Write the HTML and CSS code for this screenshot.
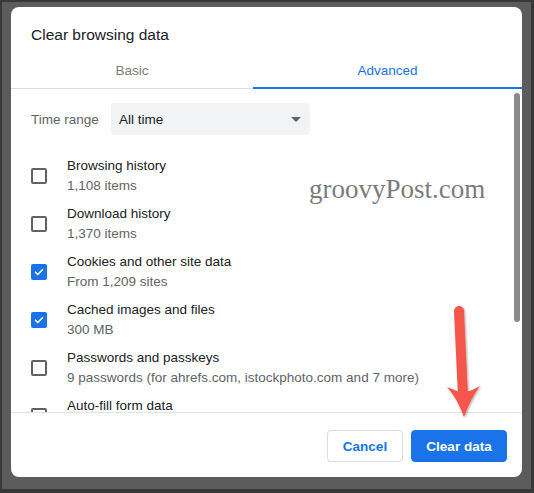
FILE: index.html
```html
<!DOCTYPE html>
<html lang="en">
<head>
<meta charset="utf-8">
<title>Clear browsing data</title>
<link rel="stylesheet" href="styles.css">
</head>
<body>
<div class="screen">
  <div class="dialog">
    <h1 class="title">Clear browsing data</h1>
    <div class="tabs">
      <div class="tab">Basic</div>
      <div class="tab active">Advanced</div>
    </div>
    <div class="body">
      <div class="range-row">
        <span class="range-label">Time range</span>
        <div class="select">
          <span>All time</span>
          <svg class="caret" width="10" height="5" viewBox="0 0 10 5"><path d="M0 0h10L5 5z" fill="#5f6368"/></svg>
        </div>
      </div>
      <ul class="items">
        <li class="item">
          <span class="box"></span>
          <div class="text"><div class="name">Browsing history</div><div class="sub">1,108 items</div></div>
        </li>
        <li class="item">
          <span class="box"></span>
          <div class="text"><div class="name">Download history</div><div class="sub">1,370 items</div></div>
        </li>
        <li class="item">
          <span class="box checked"><svg width="12" height="12" viewBox="0 0 12 12"><path d="M2.5 6.2l2.3 2.3 4.7-4.8" fill="none" stroke="#fff" stroke-width="1.6" stroke-linecap="round" stroke-linejoin="round"/></svg></span>
          <div class="text"><div class="name">Cookies and other site data</div><div class="sub">From 1,209 sites</div></div>
        </li>
        <li class="item">
          <span class="box checked"><svg width="12" height="12" viewBox="0 0 12 12"><path d="M2.5 6.2l2.3 2.3 4.7-4.8" fill="none" stroke="#fff" stroke-width="1.6" stroke-linecap="round" stroke-linejoin="round"/></svg></span>
          <div class="text"><div class="name">Cached images and files</div><div class="sub">300 MB</div></div>
        </li>
        <li class="item">
          <span class="box"></span>
          <div class="text"><div class="name">Passwords and passkeys</div><div class="sub">9 passwords (for ahrefs.com, istockphoto.com and 7 more)</div></div>
        </li>
        <li class="item">
          <span class="box"></span>
          <div class="text"><div class="name">Auto-fill form data</div><div class="sub">&nbsp;</div></div>
        </li>
      </ul>
      <div class="thumb"></div>
      <div class="watermark">groovyPost.com</div>
    </div>
    <div class="footer">
      <button class="btn cancel">Cancel</button>
      <button class="btn primary">Clear data</button>
    </div>
  </div>
  <svg class="arrow" width="534" height="493" viewBox="0 0 534 493">
    <defs>
      <filter id="sh" x="-50%" y="-50%" width="200%" height="200%">
        <feDropShadow dx="1" dy="1" stdDeviation="1" flood-color="#000" flood-opacity="0.35"/>
      </filter>
    </defs>
    <g filter="url(#sh)" fill="#f4574b">
      <path d="M459 311 L463 396" stroke="#f4574b" stroke-width="10" stroke-linecap="round"/>
      <path d="M447 387 Q456 391 463 393 Q472 391 480 386 Q471 398 464 417 Q457 398 447 387 Z"/>
    </g>
  </svg>
</div>
</body>
</html>
```

FILE: styles.css
```css
* { box-sizing: border-box; }

html, body {
  margin: 0;
  padding: 0;
}

body {
  width: 534px;
  height: 493px;
  overflow: hidden;
  font-family: "Liberation Sans", Arial, sans-serif;
  background: #383838;
}

.screen {
  position: relative;
  width: 534px;
  height: 493px;
  background: #5c5c5c;
  border-style: solid;
  border-color: #383838;
  border-width: 2px 3px 4px 2px;
  padding: 5px 0 0 9px;
}

.dialog {
  width: 511px;
  height: 470px;
  background: #fff;
  border-radius: 8px;
  display: flex;
  flex-direction: column;
  overflow: hidden;
}

.title {
  margin: 0;
  padding: 18px 20px 0;
  font-size: 15.5px;
  line-height: 20px;
  font-weight: 400;
  color: #202124;
}

.tabs {
  margin-top: 7px;
  display: grid;
  grid-template-columns: 242px 1fr;
  border-bottom: 1px solid #dadce0;
}

.tab {
  height: 36px;
  display: flex;
  align-items: center;
  justify-content: center;
  font-size: 13.5px;
  font-weight: 500;
  color: #7a7d80;
}

.tab.active {
  color: #1a73e8;
  box-shadow: inset 0 -2px 0 #1a73e8;
  margin-bottom: -1px;
  height: 37px;
  padding-top: 0;
}

.body {
  position: relative;
  flex: 1;
  overflow: hidden;
  border-bottom: 1px solid #e3e3e3;
  padding: 14px 20px 0;
}

.range-row {
  display: flex;
  align-items: center;
}

.range-label {
  width: 80px;
  font-size: 13.5px;
  color: #5f6368;
}

.select {
  width: 199px;
  height: 32px;
  background: #f1f3f4;
  border-radius: 4px;
  display: flex;
  align-items: center;
  justify-content: space-between;
  padding: 0 9px 0 8px;
  font-size: 13.5px;
  color: #202124;
}

.caret { display: block; }

.items {
  list-style: none;
  margin: 17px 0 0;
  padding: 0;
}

.item {
  height: 48px;
  display: flex;
  align-items: center;
  gap: 20px;
}

.box {
  width: 16px;
  height: 16px;
  flex: none;
  border: 2px solid #5f6368;
  border-radius: 2px;
  display: flex;
  align-items: center;
  justify-content: center;
}

.box.checked {
  background: #1a73e8;
  border-color: #1a73e8;
}

.box svg { display: block; }

.text {
  font-size: 13.5px;
  line-height: 20px;
}

.name { color: #202124; }
.sub { color: #5f6368; }

.thumb {
  position: absolute;
  right: 2px;
  top: 4px;
  width: 6px;
  height: 229px;
  border-radius: 3px;
  background: #8a8a8a;
}

.watermark {
  position: absolute;
  left: 298px;
  top: 87px;
  font-family: "Liberation Serif", "Times New Roman", serif;
  font-size: 27px;
  line-height: 1;
  color: #7b7b7b;
}

.footer {
  display: flex;
  justify-content: flex-end;
  gap: 8px;
  padding: 17px 15px 15px;
}

.btn {
  height: 32px;
  border-radius: 4px;
  font-family: "Liberation Sans", Arial, sans-serif;
  font-size: 13.5px;
  font-weight: 700;
  cursor: pointer;
}

.cancel {
  width: 76px;
  background: #fff;
  border: 1px solid #dadce0;
  color: #1a73e8;
}

.primary {
  width: 96px;
  background: #1a73e8;
  border: 1px solid #1a73e8;
  color: #fff;
}

.arrow {
  position: absolute;
  left: -2px;
  top: -2px;
  pointer-events: none;
}
```
